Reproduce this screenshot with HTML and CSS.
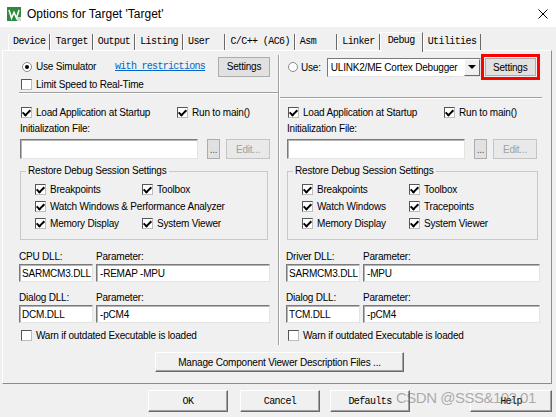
FILE: index.html
```html
<!DOCTYPE html>
<html lang="en">

<head>
    <meta charset="UTF-8">
    <meta name="viewport" content="width=device-width, initial-scale=1.0">
    <title>Options for Target 'Target'</title>
    <link rel="stylesheet" href="styles.css">
</head>

<body>
    <div class="dialog">
        <div class="titlebar">
            <svg class="app-icon" viewBox="0 0 14 14">
                <rect width="14" height="14" fill="#2e8b3d" />
                <path d="M2 3 L4.5 11 L7 5.5 L9.5 11 L12 3" fill="none" stroke="#fff" stroke-width="1.6" />
                <rect x="10" y="10" width="4" height="4" fill="#d8d8d8" />
            </svg>
            <span class="title">Options for Target 'Target'</span>
            <svg class="close" viewBox="0 0 10 10">
                <path d="M0.5 0.5 L9.5 9.5 M9.5 0.5 L0.5 9.5" stroke="#000" stroke-width="1" />
            </svg>
        </div>

        <!-- tab strip -->
        <div class="tabs">
            <span class="tab">Device</span>
            <span class="tab">Target</span>
            <span class="tab">Output</span>
            <span class="tab">Listing</span>
            <span class="tab">User  </span>
            <span class="tab">C/C++ (AC6)</span>
            <span class="tab">Asm   </span>
            <span class="tab">Linker</span>
            <span class="tab active">Debug</span>
            <span class="tab">Utilities</span>
        </div>

        <div class="panel">
            <div class="columns">
                <!-- simulator side -->
                <div class="col col-left">
                    <div class="top top-left">
                        <div class="row sim-row">
                            <span class="radio on"></span>
                            <span class="sim-label">Use Simulator</span>
                            <span class="link">with restrictions</span>
                            <span class="btn settings">Settings</span>
                        </div>
                        <div class="row limit-row">
                            <span class="cb"></span>
                            <span>Limit Speed to Real-Time</span>
                        </div>
                    </div>
                    <div class="sep sep-left"></div>
                    <div class="row load-row">
                        <span class="check-item first"><span class="cb on"></span>Load Application at Startup</span>
                        <span class="check-item"><span class="cb on"></span>Run to main()</span>
                    </div>
                    <div class="caption">Initialization File:</div>
                    <div class="file-row">
                        <span class="field file"></span>
                        <span class="btn dots">...</span>
                        <span class="btn edit disabled">Edit...</span>
                    </div>
                    <fieldset class="group">
                        <legend>Restore Debug Session Settings</legend>
                        <div class="group-grid">
                            <span class="check-item"><span class="cb on"></span>Breakpoints</span>
                            <span class="check-item"><span class="cb on"></span>Toolbox</span>
                            <span class="check-item span-all"><span class="cb on"></span>Watch Windows &amp; Performance Analyzer</span>
                            <span class="check-item"><span class="cb on"></span>Memory Display</span>
                            <span class="check-item"><span class="cb on"></span>System Viewer</span>
                        </div>
                    </fieldset>
                    <div class="dll-labels">
                        <span class="dll-name">CPU DLL:</span>
                        <span>Parameter:</span>
                    </div>
                    <div class="dll-fields">
                        <span class="field dll">SARMCM3.DLL</span>
                        <span class="field param">-REMAP -MPU</span>
                    </div>
                    <div class="dll-labels second">
                        <span class="dll-name">Dialog DLL:</span>
                        <span>Parameter:</span>
                    </div>
                    <div class="dll-fields">
                        <span class="field dll">DCM.DLL</span>
                        <span class="field param">-pCM4</span>
                    </div>
                    <div class="row warn-row">
                        <span class="cb"></span>
                        <span>Warn if outdated Executable is loaded</span>
                    </div>
                </div>

                <div class="divider"></div>

                <!-- target debugger side -->
                <div class="col col-right">
                    <div class="top top-right">
                        <div class="row use-row">
                            <span class="radio"></span>
                            <span class="use-label">Use:</span>
                            <span class="select">
                                <span class="select-text">ULINK2/ME Cortex Debugger</span>
                                <span class="select-arrow"><span class="arrow"></span></span>
                            </span>
                            <span class="highlight">
                                <span class="btn settings">Settings</span>
                            </span>
                        </div>
                    </div>
                    <div class="sep sep-right"></div>
                    <div class="row load-row">
                        <span class="check-item first"><span class="cb on"></span>Load Application at Startup</span>
                        <span class="check-item"><span class="cb on"></span>Run to main()</span>
                    </div>
                    <div class="caption">Initialization File:</div>
                    <div class="file-row">
                        <span class="field file"></span>
                        <span class="btn dots">...</span>
                        <span class="btn edit disabled">Edit...</span>
                    </div>
                    <fieldset class="group">
                        <legend>Restore Debug Session Settings</legend>
                        <div class="group-grid">
                            <span class="check-item"><span class="cb on"></span>Breakpoints</span>
                            <span class="check-item"><span class="cb on"></span>Toolbox</span>
                            <span class="check-item"><span class="cb on"></span>Watch Windows</span>
                            <span class="check-item"><span class="cb on"></span>Tracepoints</span>
                            <span class="check-item"><span class="cb on"></span>Memory Display</span>
                            <span class="check-item"><span class="cb on"></span>System Viewer</span>
                        </div>
                    </fieldset>
                    <div class="dll-labels">
                        <span class="dll-name">Driver DLL:</span>
                        <span>Parameter:</span>
                    </div>
                    <div class="dll-fields">
                        <span class="field dll">SARMCM3.DLL</span>
                        <span class="field param">-MPU</span>
                    </div>
                    <div class="dll-labels second">
                        <span class="dll-name">Dialog DLL:</span>
                        <span>Parameter:</span>
                    </div>
                    <div class="dll-fields">
                        <span class="field dll">TCM.DLL</span>
                        <span class="field param">-pCM4</span>
                    </div>
                    <div class="row warn-row">
                        <span class="cb"></span>
                        <span>Warn if outdated Executable is loaded</span>
                    </div>
                </div>
            </div>

            <div class="manage-row">
                <span class="btn3d manage">Manage Component Viewer Description Files ...</span>
            </div>
        </div>

        <div class="buttons">
            <span class="btn3d dlg-btn ok">OK</span>
            <span class="btn3d dlg-btn cancel">Cancel</span>
            <span class="btn3d dlg-btn defaults">Defaults</span>
            <span class="btn3d dlg-btn help">Help</span>
        </div>

        <div class="watermark">CSDN @SSS&amp;102.01</div>
    </div>
</body>

</html>
```

FILE: styles.css
```css
* {
    box-sizing: border-box;
}

html,
body {
    margin: 0;
}

body {
    width: 556px;
    height: 417px;
    overflow: hidden;
    background: #f0f0f0;
    font-family: "Liberation Sans", Arial, sans-serif;
    font-size: 10px;
    letter-spacing: -0.2px;
    color: #000;
}

.dialog {
    position: relative;
    width: 556px;
    height: 417px;
}

/* title bar */
.titlebar {
    height: 27px;
    background: #fff;
    display: flex;
    align-items: center;
    padding: 0 8px 0 7px;
}

.app-icon {
    width: 14px;
    height: 14px;
}

.title {
    margin-left: 6px;
    font-size: 12px;
    letter-spacing: 0;
}

.close {
    margin-left: auto;
    width: 10px;
    height: 10px;
}

/* tabs */
.tabs {
    display: flex;
    height: 23px;
    padding: 7px 0 0 8px;
    font-family: "Liberation Mono", "DejaVu Sans Mono", monospace;
    font-size: 10px;
    letter-spacing: -0.6px;
}

.tab {
    height: 16px;
    line-height: 16px;
    padding: 0 4px;
    border-left: 1px solid #fff;
    border-right: 1px solid #696969;
    white-space: pre;
}

.tab.active {
    height: 20px;
    margin: -2px 0;
    padding: 0 7px;
    border-top: 1px solid #fff;
    background: #f0f0f0;
    position: relative;
    z-index: 1;
}

/* main panel */
.panel {
    height: 334px;
    margin: 0 4px 0 2px;
    padding: 4px 0 11px;
    border: 1px solid;
    border-color: #fff #8c8c8c #8c8c8c #fff;
}

.columns {
    display: grid;
    grid-template-columns: 275px 2px 1fr;
}

.col {
    display: flex;
    flex-direction: column;
    padding-bottom: 3px;
}

.col-left {
    padding-left: 16px;
    padding-right: 8px;
}

.col-right {
    padding-left: 6px;
    padding-right: 14px;
}

.divider {
    border-left: 1px solid #a0a0a0;
    border-right: 1px solid #fff;
}

.row {
    display: flex;
    align-items: center;
}

.top-left {
    height: 37px;
}

.top-right {
    height: 42px;
}

.sim-row {
    margin-top: 1px;
    height: 21px;
}

.limit-row {
    height: 15px;
}

.sim-label {
    width: 79px;
}

.link {
    font-family: "Liberation Mono", "DejaVu Sans Mono", monospace;
    font-size: 10px;
    letter-spacing: -0.7px;
    color: #0066cc;
    text-decoration: underline;
}

.sep {
    height: 2px;
    border-top: 1px solid #a0a0a0;
    border-bottom: 1px solid #fff;
}

.sep-left {
    margin-right: -8px;
}

.sep-right {
    margin-left: -6px;
    margin-right: -2px;
}

.load-row {
    height: 14px;
    margin-top: 11px;
}

.col-right .load-row {
    margin-top: 6px;
}

.check-item {
    display: flex;
    align-items: center;
    white-space: nowrap;
}

.check-item.first {
    width: 156px;
}

.caption {
    margin-top: 3px;
    height: 13px;
    line-height: 13px;
    padding-left: 1px;
}

.file-row {
    display: flex;
    height: 20px;
    margin-top: 4px;
}

/* controls */
.cb {
    flex: none;
    position: relative;
    width: 11px;
    height: 11px;
    margin: 0 4px 0 2px;
    background: #fff;
    border: 1px solid;
    border-color: #555 #bdbdbd #bdbdbd #555;
}

.cb.on::after {
    content: "";
    position: absolute;
    left: 2px;
    top: 0;
    width: 3px;
    height: 6px;
    border: solid #000;
    border-width: 0 2px 2px 0;
    transform: rotate(45deg);
}

.radio {
    flex: none;
    display: flex;
    align-items: center;
    justify-content: center;
    width: 10px;
    height: 10px;
    margin: 0 4px 0 3px;
    border-radius: 50%;
    border: 1px solid #8a8a8a;
    background: #fff;
}

.radio.on::after {
    content: "";
    width: 4px;
    height: 4px;
    border-radius: 50%;
    background: #000;
}

.col-right .radio {
    margin: 0 3px 0 2px;
}

.field {
    display: flex;
    align-items: center;
    padding-left: 2px;
    background: #fff;
    border: 1px solid;
    border-color: #7a7a7a #e3e3e3 #e3e3e3 #7a7a7a;
    box-shadow: inset 1px 1px 0 #b4b4b4;
    white-space: nowrap;
}

.field.file {
    width: 178px;
    margin-left: 1px;
}

.btn {
    display: flex;
    align-items: center;
    justify-content: center;
    background: #e1e1e1;
    border: 1px solid #adadad;
}

.btn.settings {
    margin-left: auto;
    width: 52px;
    height: 20px;
}

.btn.dots {
    width: 13px;
    margin-left: 9px;
    color: #555;
}

.btn.edit {
    width: 44px;
    margin-left: 6px;
}

.btn.disabled {
    color: #a0a0a0;
    background: #e9e9e9;
    border-color: #c4c4c4;
}

.btn3d {
    display: flex;
    align-items: center;
    justify-content: center;
    background: #f0f0f0;
    border: 1px solid;
    border-color: #fff #696969 #696969 #fff;
    box-shadow: inset -1px -1px 0 #a0a0a0;
}

/* right side debugger chooser */
.use-row {
    margin-top: -1px;
    height: 26px;
}

.use-label {
    margin-right: 6px;
}

.select {
    display: flex;
    width: 154px;
    height: 19px;
    background: #fff;
    border: 1px solid;
    border-color: #7a7a7a #e3e3e3 #e3e3e3 #7a7a7a;
}

.select-text {
    flex: 1;
    display: flex;
    align-items: center;
    padding-left: 3px;
    white-space: nowrap;
}

.select-arrow {
    width: 16px;
    display: flex;
    align-items: center;
    justify-content: center;
    background: #f0f0f0;
    border: 1px solid;
    border-color: #fff #696969 #696969 #fff;
}

.arrow {
    width: 0;
    height: 0;
    border-left: 4px solid transparent;
    border-right: 4px solid transparent;
    border-top: 4px solid #000;
}

.highlight {
    display: flex;
    padding: 1px;
    border: 3px solid #f00;
}

.highlight .btn.settings {
    width: 51px;
    height: 18px;
}

/* group box */
.group {
    margin: 6px 2px 0 1px;
    padding: 4px 0 7px 14px;
    border: 1px solid #c8c8c8;
    min-width: 0;
}

.group legend {
    margin-left: -9px;
    padding: 0 2px;
    line-height: 12px;
    font-size: 10px;
}

.group-grid {
    display: grid;
    grid-template-columns: 107px 1fr;
    grid-auto-rows: 17px;
}

.group-grid .cb {
    margin-left: 0;
}

.span-all {
    grid-column: 1 / -1;
}

/* dll fields */
.dll-labels {
    display: flex;
    height: 12px;
    line-height: 12px;
    margin-top: 11px;
}

.dll-labels.second {
    margin-top: 10px;
}

.dll-name {
    width: 77px;
}

.dll-fields {
    display: flex;
    height: 18px;
    margin-top: 1px;
}

.field.dll {
    width: 74px;
}

.field.param {
    flex: 1;
    margin-left: 3px;
    padding-left: 3px;
}

.warn-row {
    height: 14px;
    margin-top: 5px;
}

.manage-row {
    display: flex;
    padding: 7px 0 0 152px;
}

.manage {
    width: 249px;
    height: 20px;
}

/* bottom buttons */
.buttons {
    display: flex;
    margin-top: 6px;
    padding-left: 148px;
    font-family: "Liberation Mono", "DejaVu Sans Mono", monospace;
    font-size: 10px;
    letter-spacing: -0.6px;
}

.dlg-btn {
    width: 80px;
    height: 22px;
}

.cancel {
    margin-left: 12px;
}

.defaults {
    margin-left: 10px;
}

.help {
    margin-left: 60px;
    width: 82px;
}

.watermark {
    position: absolute;
    left: 396px;
    top: 387px;
    font-size: 15px;
    line-height: 22px;
    letter-spacing: -0.5px;
    color: rgba(110, 110, 110, 0.55);
    white-space: nowrap;
}
```
